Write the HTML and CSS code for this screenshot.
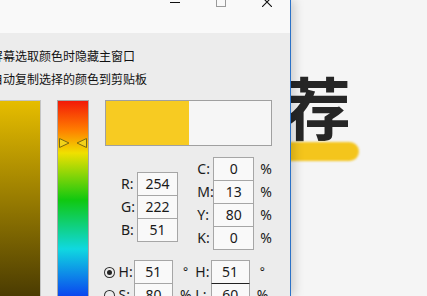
FILE: index.html
```html
<!DOCTYPE html>
<html lang="zh-CN">
<head>
    <meta charset="UTF-8">
    <meta name="viewport" content="width=device-width, initial-scale=1.0">
    <title>颜色选择器</title>
    <link rel="stylesheet" href="styles.css">
</head>
<body>
    <!-- 背后的网页 -->
    <div class="backdrop">
        <h1 class="headline">推荐</h1>
        <div class="headline-bar"></div>
    </div>

    <!-- 取色器窗口 -->
    <div class="window">
        <div class="title-bar">
            <span class="cap-btn">
                <svg width="10" height="7" viewBox="0 3 10 7"><path d="M0 5.5H10" stroke="#111" stroke-width="1"/></svg>
            </span>
            <span class="cap-btn">
                <svg width="10" height="7" viewBox="0 3 10 7"><rect x="0.5" y="0.5" width="9" height="9" fill="none" stroke="#9a9a9a" stroke-width="1"/></svg>
            </span>
            <span class="cap-btn">
                <svg width="10" height="7" viewBox="0 3 10 7"><path d="M0 0L10 10M10 0L0 10" stroke="#111" stroke-width="1.1"/></svg>
            </span>
        </div>

        <div class="window-body">
            <div class="options">
                <div class="option">屏幕选取颜色时隐藏主窗口</div>
                <div class="option">自动复制选择的颜色到剪贴板</div>
            </div>

            <div class="picker">
                <div class="sv-field"></div>
                <div class="hue-bar">
                    <svg class="hue-marker" width="30" height="10" viewBox="0 0 30 10">
                        <path d="M1.5 0.5L11 5L1.5 9.5Z" fill="#f2d21a" stroke="#7a6a10" stroke-width="1"/>
                        <path d="M28.5 0.5L19 5L28.5 9.5Z" fill="#f2d21a" stroke="#7a6a10" stroke-width="1"/>
                    </svg>
                </div>

                <div class="panel">
                    <div class="preview">
                        <div class="preview-new"></div>
                        <div class="preview-old"></div>
                    </div>

                    <div class="values">
                        <div class="col rgb">
                            <div class="row"><span class="lbl">R:</span><span class="box">254</span></div>
                            <div class="row"><span class="lbl">G:</span><span class="box">222</span></div>
                            <div class="row"><span class="lbl">B:</span><span class="box">51</span></div>
                        </div>
                        <div class="col cmyk">
                            <div class="row"><span class="lbl">C:</span><span class="box">0</span><span class="unit">%</span></div>
                            <div class="row"><span class="lbl">M:</span><span class="box">13</span><span class="unit">%</span></div>
                            <div class="row"><span class="lbl">Y:</span><span class="box">80</span><span class="unit">%</span></div>
                            <div class="row"><span class="lbl">K:</span><span class="box">0</span><span class="unit">%</span></div>
                        </div>
                    </div>

                    <div class="hsx">
                        <div class="row">
                            <span class="radio checked"></span>
                            <span class="lbl">H:</span><span class="box">51</span><span class="unit deg">°</span>
                            <span class="lbl">H:</span><span class="box">51</span><span class="unit deg">°</span>
                        </div>
                        <div class="row">
                            <span class="radio"></span>
                            <span class="lbl">S:</span><span class="box">80</span><span class="unit">%</span>
                            <span class="lbl">L:</span><span class="box focus">60</span><span class="unit">%</span>
                        </div>
                    </div>
                </div>
            </div>
        </div>
    </div>
</body>
</html>
```

FILE: styles.css
```css
body {
    margin: 0;
    width: 427px;
    height: 296px;
    overflow: hidden;
    position: relative;
    font-family: 'Noto Sans', 'Noto Sans CJK SC', sans-serif;
    color: #1a1a1a;
}

/* 背后的网页 */
.backdrop {
    height: 100%;
    padding-top: 72px;
    box-sizing: border-box;
    background: #f5f5f5;
}

.headline {
    margin: 0;
    padding-left: 215px;
    font-family: 'Noto Sans CJK SC', sans-serif;
    font-size: 68px;
    line-height: 68px;
    font-weight: 700;
    color: #262626;
    white-space: nowrap;
    filter: blur(0.5px);
}

.headline-bar {
    width: 100px;
    height: 19px;
    margin: 2px 0 0 259px;
    border-radius: 10px;
    background: #f4c51c;
    filter: blur(0.8px);
}

/* 窗口 */
.window {
    position: absolute;
    top: 0;
    left: 0;
    width: 291px;
    height: 296px;
    box-sizing: border-box;
    border-right: 1px solid #2c72c7;
    background: #ececec;
    box-shadow: 3px 0 10px rgba(0, 0, 0, 0.18);
}

.title-bar {
    height: 33px;
    display: flex;
    justify-content: flex-end;
    background: #f9f9f9;
}

.cap-btn {
    width: 46px;
    display: flex;
    justify-content: center;
    align-items: flex-start;
}

.cap-btn svg {
    display: block;
}

.options {
    margin-left: -9px;
    padding-top: 11px;
    font-family: 'Noto Sans CJK SC', sans-serif;
    font-size: 12px;
    line-height: 23px;
    color: #111;
    white-space: nowrap;
}

.picker {
    display: flex;
    gap: 16px;
    margin-top: 10px;
}

.sv-field {
    width: 40px;
    height: 200px;
    border-top: 1px solid #c4c4c4;
    border-right: 1px solid #c4c4c4;
    background: linear-gradient(to bottom, #e6bd00, #4a3b02 196px);
}

.hue-bar {
    position: relative;
    width: 30px;
    height: 200px;
    border: 1px solid #a8a8a8;
    background: linear-gradient(to bottom,
        #f21a08 0px,
        #ff7a00 28px,
        #f0e000 52px,
        #10c810 99px,
        #10d8e0 148px,
        #0a40f0 197px,
        #c020e0 247px);
}

.hue-marker {
    position: absolute;
    top: 37px;
    left: 0;
}

.panel {
    width: 167px;
}

.preview {
    height: 46px;
    display: flex;
    border: 1px solid #a0a0a0;
    box-sizing: border-box;
}

.preview-new {
    width: 83px;
    background: #f7cb22;
}

.preview-old {
    flex: 1;
    background: #f6f6f6;
}

.values {
    display: flex;
    margin-top: 11px;
    height: 93px;
}

.col {
    display: flex;
    flex-direction: column;
}

.rgb {
    width: 80px;
    margin-left: 16px;
    padding-top: 15px;
}

.row {
    display: flex;
    align-items: center;
    font-size: 14px;
}

.row + .row {
    margin-top: -1px;
}

.lbl {
    width: 16px;
    line-height: 24px;
}

.box {
    width: 41px;
    height: 24px;
    box-sizing: border-box;
    border: 1px solid #a6a6a6;
    background: #f9f9f9;
    text-align: center;
    line-height: 22px;
}

.box.focus {
    border-top-color: #222;
}

.unit {
    padding-left: 6px;
    line-height: 24px;
}

.hsx {
    margin-top: 10px;
}

.radio {
    width: 11px;
    height: 11px;
    margin: 0 4px 0 -1px;
    box-sizing: border-box;
    border: 1px solid #333;
    border-radius: 50%;
    display: flex;
    align-items: center;
    justify-content: center;
}

.radio.checked::after {
    content: '';
    width: 5px;
    height: 5px;
    border-radius: 50%;
    background: #222;
}

.hsx .unit {
    width: 23px;
    box-sizing: border-box;
    padding-left: 7px;
}

.hsx .unit.deg {
    align-self: flex-start;
    padding-left: 10px;
    font-size: 12px;
}
```
